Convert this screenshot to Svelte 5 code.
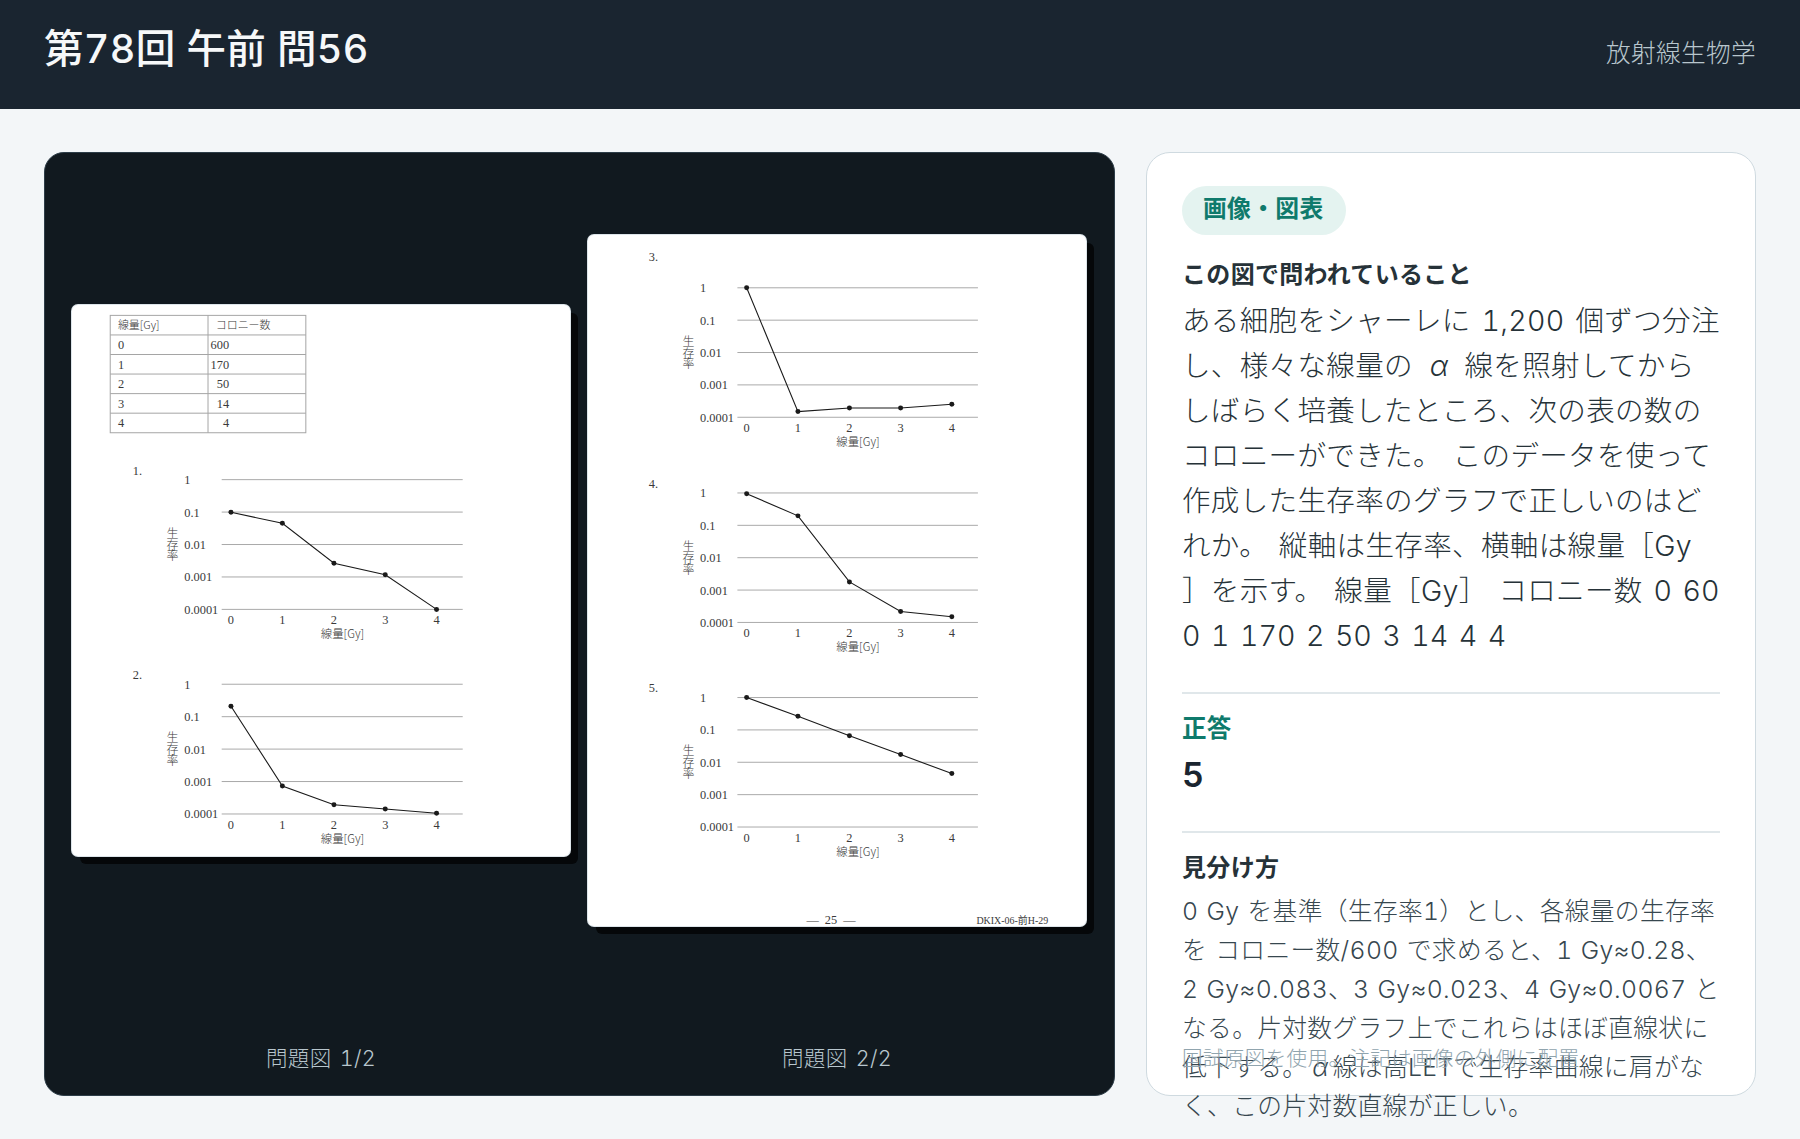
<script>
  const xs = [158.3, 209.8, 261.5, 312.9, 364.3];
  const ticks = ["1", "0.1", "0.01", "0.001", "0.0001"];
  const rows = [["0", "600"], ["1", "170"], ["2", "50"], ["3", "14"], ["4", "4"]];

  // y offsets of the plotted points, measured down from the top gridline
  const sheet1 = [
    { no: "1.", top: 176, labelY: -9, pts: [32.7, 43.7, 83.7, 95.3, 130] },
    { no: "2.", top: 381, labelY: -9, pts: [22, 102, 120.7, 125, 129.3] }
  ];
  const sheet2 = [
    { no: "3.", top: 53, labelY: -31.3, pts: [0, 124.3, 120.7, 120.7, 117] },
    { no: "4.", top: 259, labelY: -9, pts: [0.7, 23, 89.3, 119, 124.3] },
    { no: "5.", top: 464.4, labelY: -9.3, pts: [0, 18.7, 38.3, 57.3, 76.3] }
  ];
</script>

{#snippet chart(c)}
  <g transform="translate(0 {c.top})">
    <text class="num" x="60" y={c.labelY + 4}>{c.no}</text>
    {#each ticks as t, i}
      <line class="grid" x1="149" x2="390.5" y1={i * 32.5} y2={i * 32.5} />
      <text class="num" x="111.5" y={i * 32.5 + 4.5}>{t}</text>
    {/each}
    <text class="jp mid vert" x="99.8" y="58">生</text>
    <text class="jp mid vert" x="99.8" y="70">存</text>
    <text class="jp mid vert" x="99.8" y="81">率</text>
    <polyline class="curve" points={c.pts.map((y, i) => `${xs[i]},${y}`).join(" ")} />
    {#each c.pts as y, i}
      <circle cx={xs[i]} cy={y} r="2.5" />
      <text class="num mid" x={xs[i]} y="145">{i}</text>
    {/each}
    <text class="jp mid axis" x="270" y="158.7">線量[Gy]</text>
  </g>
{/snippet}

<div class="page">
  <header class="top">
    <h1>第78回 午前 問56</h1>
    <span class="subject">放射線生物学</span>
  </header>

  <main class="layout">
    <section class="viewer">
      <figure>
        <div class="stage">
          <div class="sheet">
            <svg viewBox="-1 1 499 553">
              <g class="tbl" transform="translate(0 -1)">
                <rect x="37.3" y="12.4" width="196" height="117.6" />
                <line x1="135.3" x2="135.3" y1="12.4" y2="130" />
                <line x1="37.3" x2="233.3" y1="32" y2="32" />
                <text class="jp" x="45" y="26">線量[Gy]</text>
                <text class="jp" x="143" y="26" letter-spacing="1">コロニー数</text>
                {#each rows as r, i}
                  {#if i < 4}
                    <line x1="37.3" x2="233.3" y1={51.6 + i * 19.6} y2={51.6 + i * 19.6} />
                  {/if}
                  <text class="num" x="45" y={46.3 + i * 19.6}>{r[0]}</text>
                  <text class="num end" x="156.5" y={46.3 + i * 19.6}>{r[1]}</text>
                {/each}
              </g>
              {#each sheet1 as c}
                {@render chart(c)}
              {/each}
            </svg>
          </div>
        </div>
        <figcaption>問題図 1/2</figcaption>
      </figure>
      <figure>
        <div class="stage">
          <div class="sheet">
            <svg viewBox="-1 0 500 694">
              {#each sheet2 as c}
                {@render chart(c)}
              {/each}
              <text class="num mid foot" x="243" y="692">— 25 —</text>
              <text class="small" x="389" y="692">DKIX-06-前H-29</text>
            </svg>
          </div>
        </div>
        <figcaption>問題図 2/2</figcaption>
      </figure>
    </section>

    <aside class="panel">
      <div class="scroll">
        <span class="pill">画像・図表</span>
        <h2>この図で問われていること</h2>
        <p class="question">ある細胞をシャーレに 1,200 個ずつ分注し、様々な線量の <i>α</i> 線を照射してからしばらく培養したところ、次の表の数のコロニーができた。 このデータを使って作成した生存率のグラフで正しいのはどれか。 縦軸は生存率、横軸は線量［Gy<br />］を示す。 線量［Gy］ コロニー数 <span class="vals">0 600 1 170 2 50 3 14 4 4</span></p>
        <hr />
        <div class="answer-label">正答</div>
        <div class="answer">5</div>
        <hr class="second" />
        <h3>見分け方</h3>
        <p class="explain">0 Gy を基準（生存率1）とし、各線量の生存率を コロニー数/600 で求めると、1 Gy≈0.28、2 Gy≈0.083、3 Gy≈0.023、4 Gy≈0.0067 となる。片対数グラフ上でこれらはほぼ直線状に低下する。<i>α</i>線は高LETで生存率曲線に肩がなく、この片対数直線が正しい。</p>
      </div>
      <footer class="note">国試原図を使用。注記は画像の外側に配置</footer>
    </aside>
  </main>
</div>

<style>
  :global(body) {
    background: #f3f6f8;
    font-family: Inter, "Noto Sans CJK JP", sans-serif;
    font-variant-numeric: tabular-nums;
    letter-spacing: 0.02em;
  }
  .page {
    height: 1139px;
    overflow: hidden;
  }
  .top {
    height: 109px;
    padding: 0 44px;
    box-sizing: border-box;
    background: #1a2530;
    display: flex;
    align-items: center;
    justify-content: space-between;
  }
  h1 {
    margin: 0 0 19px;
    font-size: 39.5px;
    font-weight: 500;
    color: #f6f8f9;
  }
  .subject {
    margin-bottom: 7px;
    font-size: 24.7px;
    font-weight: 300;
    color: #b8c6cd;
  }
  .layout {
    display: grid;
    grid-template-columns: 1071px 610px;
    gap: 31px;
    padding: 43px 44px 0;
  }
  .viewer {
    height: 944px;
    box-sizing: border-box;
    background: #11191f;
    border: 1px solid #2d3d48;
    border-radius: 20px;
    padding: 27px 28px 22px 27px;
    display: grid;
    grid-template-columns: 1fr 1fr;
    gap: 18px;
  }
  figure {
    margin: 0;
    display: flex;
    flex-direction: column;
    min-width: 0;
  }
  .stage {
    flex: 1;
    display: flex;
    align-items: center;
  }
  .sheet {
    width: 100%;
    background: #fff;
    border-radius: 6px;
    box-shadow: 0 0 0 1px #dde5ea, 8px 8px 0 #050709;
    overflow: hidden;
  }
  svg {
    display: block;
    width: 100%;
    height: auto;
  }
  figcaption {
    margin-top: 62px;
    text-align: center;
    font-size: 21.5px;
    font-weight: 300;
    line-height: 30px;
    color: #b8c6cd;
    word-spacing: 0.1em;
  }
  .grid {
    stroke: #a9a9a9;
    stroke-width: 1;
  }
  .curve {
    fill: none;
    stroke: #1a1a1a;
    stroke-width: 1.1;
  }
  circle {
    fill: #1a1a1a;
  }
  text {
    fill: #3a3a3a;
    letter-spacing: 0;
  }
  .num {
    font-family: "Liberation Serif", serif;
    font-size: 12.4px;
  }
  .jp {
    font-family: "Noto Sans CJK JP", sans-serif;
    font-size: 11px;
    font-weight: 300;
  }
  .vert {
    font-size: 12px;
  }
  .axis {
    font-size: 11.5px;
  }
  .foot {
    word-spacing: 3px;
  }
  .small {
    font-family: "Liberation Serif", "Noto Sans CJK JP", serif;
    font-size: 10px;
  }
  .mid {
    text-anchor: middle;
  }
  .end {
    text-anchor: end;
  }
  .tbl rect,
  .tbl line {
    fill: none;
    stroke: #a5a5a5;
    stroke-width: 1;
  }
  .panel {
    height: 944px;
    box-sizing: border-box;
    background: #fff;
    border: 1px solid #cfdae0;
    border-radius: 24px;
    padding: 33px 35px 21px;
    display: flex;
    flex-direction: column;
    color: #263238;
  }
  .scroll {
    flex: 1;
    min-height: 0;
  }
  .pill {
    display: inline-block;
    padding: 0 22px 0 21px;
    height: 49px;
    line-height: 45px;
    border-radius: 25px;
    background: #e4f3f0;
    color: #0f7a6c;
    font-size: 23.8px;
    font-weight: 600;
  }
  h2,
  h3 {
    margin: 0;
    font-size: 24px;
    font-weight: 600;
    line-height: 39px;
  }
  h2 {
    margin-top: 20px;
  }
  .question {
    margin: 4px 0 0;
    font-size: 28.56px;
    font-weight: 300;
    line-height: 45px;
    word-break: break-all;
    line-break: anywhere;
    word-spacing: 0.1em;
  }
  .question i {
    margin: 0 5px 0 6px;
  }
  .vals {
    letter-spacing: 0;
  }
  hr {
    border: 0;
    border-top: 2px solid #e0e7ea;
    margin: 34px 0 0;
  }
  .answer-label {
    margin-top: 16px;
    color: #0f7a6c;
    font-size: 24.5px;
    font-weight: 600;
    line-height: 36px;
  }
  .answer {
    margin-top: 5px;
    font-size: 34px;
    font-weight: 600;
    line-height: 48px;
    color: #1a2530;
  }
  .second {
    margin-top: 32px;
  }
  h3 {
    margin-top: 15px;
  }
  .explain {
    margin: 5px 0 0;
    font-size: 24.75px;
    font-weight: 300;
    line-height: 39px;
    color: #37474f;
    word-spacing: 0.05em;
  }
  .explain i {
    margin: 0 4px 0 5px;
  }
  .note {
    font-size: 20.6px;
    font-weight: 300;
    line-height: 30px;
    color: #90a4ae;
  }
</style>
